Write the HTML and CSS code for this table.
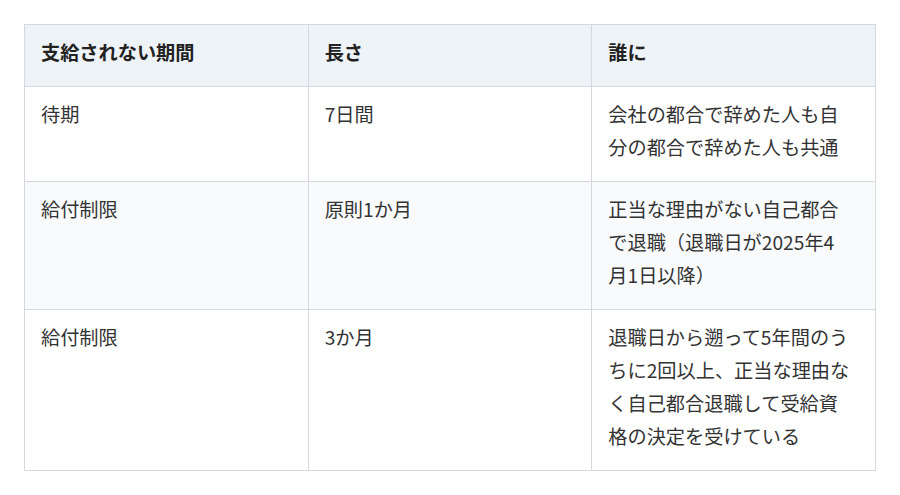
FILE: index.html
```html
<!DOCTYPE html>
<html lang="ja">
<head>
<meta charset="utf-8">
<link rel="stylesheet" href="styles.css">
</head>
<body>
<table class="tbl">
  <thead>
    <tr>
      <th>支給されない期間</th>
      <th>長さ</th>
      <th>誰に</th>
    </tr>
  </thead>
  <tbody>
    <tr>
      <td>待期</td>
      <td>7日間</td>
      <td>会社の都合で辞めた人も自分の都合で辞めた人も共通</td>
    </tr>
    <tr class="alt">
      <td>給付制限</td>
      <td>原則1か月</td>
      <td>正当な理由がない自己都合で退職（退職日が2025年4月1日以降）</td>
    </tr>
    <tr>
      <td>給付制限</td>
      <td>3か月</td>
      <td>退職日から遡って5年間のうちに2回以上、正当な理由なく自己都合退職して受給資格の決定を受けている</td>
    </tr>
  </tbody>
</table>
</body>
</html>
```
FILE: styles.css
```css
html, body {
  margin: 0;
  padding: 0;
  background: #ffffff;
}
body {
  padding: 24px 24px;
  font-family: "Noto Sans CJK JP", "Noto Sans", sans-serif;
  color: #333333;
}
.tbl {
  border-collapse: collapse;
  width: 852px;
  table-layout: fixed;
  font-size: 19.2px;
  line-height: 33px;
}
.tbl th, .tbl td {
  border: 1px solid #d3d9df;
  padding: 11px 23px 17px 16px;
  text-align: left;
  vertical-align: top;
  width: 33.33%;
}
.tbl th {
  background: #eef3f7;
  font-weight: 700;
  color: #222222;
}
.tbl tr.alt td {
  background: #f8fafc;
}
```
